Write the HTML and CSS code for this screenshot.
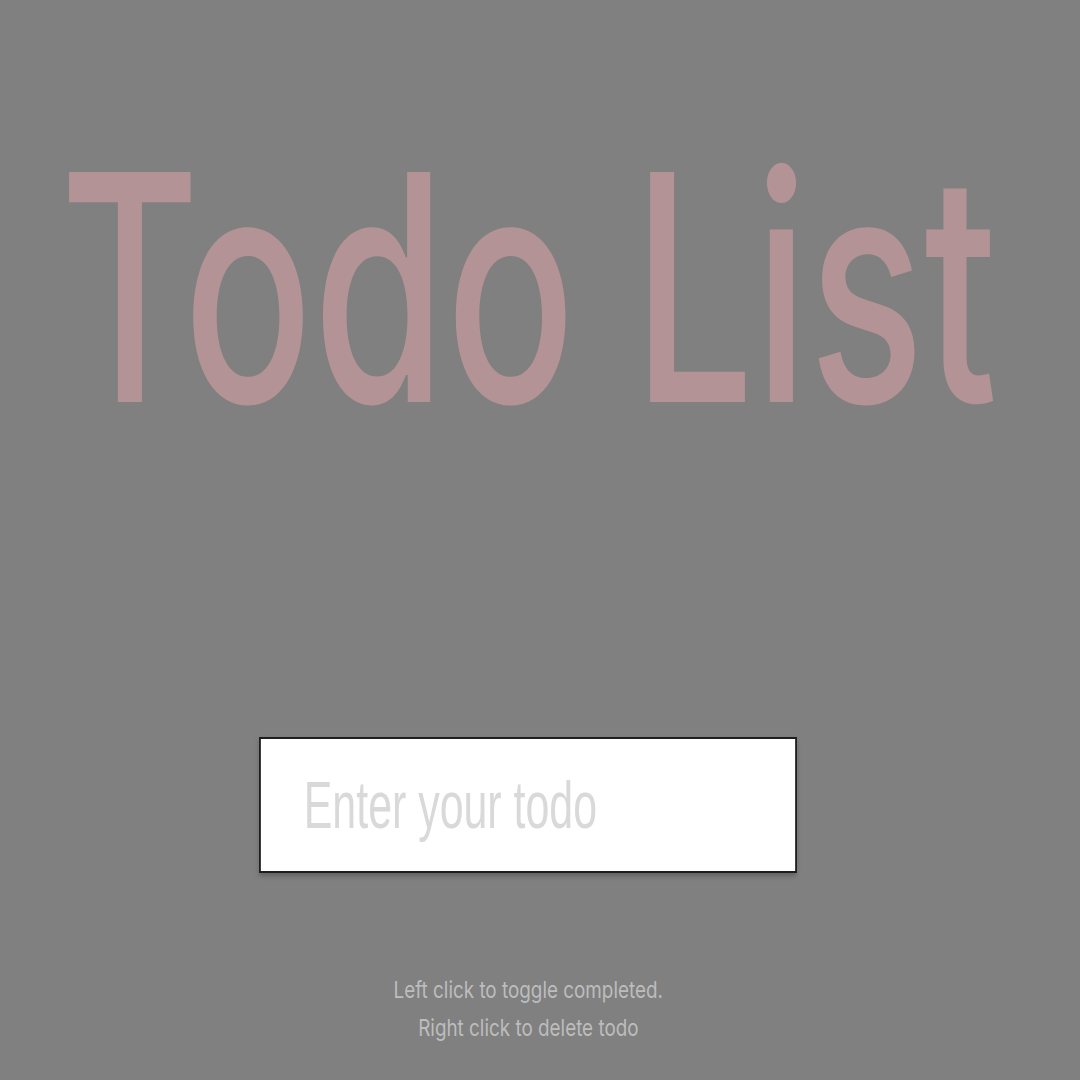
FILE: index.html
```html
<!DOCTYPE html>
<html lang="en">
<head>
<meta charset="utf-8">
<title>Todo List</title>
<link rel="stylesheet" href="styles.css">
</head>
<body>
<main class="app">
  <h1 class="title">Todo List</h1>
  <form class="todo-form">
    <input class="todo-input" type="text" placeholder="Enter your todo">
  </form>
  <div class="help">
    <p class="help-line">Left click to toggle completed.</p>
    <p class="help-line">Right click to delete todo</p>
  </div>
</main>
</body>
</html>
```

FILE: styles.css
```css
html, body {
  margin: 0;
  padding: 0;
  height: 100%;
}
body {
  background: #808080;
  overflow: hidden;
}
.app {
  width: 1056px;
  display: flex;
  flex-direction: column;
  align-items: center;
}
.title {
  margin: 129px 0 0;
  font-family: Inter, sans-serif;
  font-weight: 500;
  font-size: 316px;
  line-height: 316px;
  color: #b39396;
  white-space: nowrap;
  transform: scaleX(0.68);
}
.todo-form {
  margin-top: 292px;
  width: 538px;
  height: 136px;
  display: flex;
  justify-content: center;
}
.todo-input {
  flex: none;
  box-sizing: border-box;
  width: 828px;
  height: 136px;
  margin: 0;
  padding: 0 0 0 66px;
  background: #fff;
  border-style: solid;
  border-color: #1e1e1e;
  border-width: 2px 3px;
  box-shadow: 0 3px 6px rgba(0, 0, 0, 0.25);
  font-family: "Liberation Sans", Arial, sans-serif;
  font-size: 66px;
  color: #333;
  outline: none;
  transform: scaleX(0.65);
}
.todo-input::placeholder {
  color: #d9d9d9;
}
.help {
  margin-top: 98px;
  display: flex;
  flex-direction: column;
  align-items: center;
}
.help-line {
  margin: 0;
  font-family: Inter, sans-serif;
  font-size: 23px;
  line-height: 38px;
  color: #bdbdbd;
  white-space: nowrap;
  transform: scaleX(0.82);
}
```
